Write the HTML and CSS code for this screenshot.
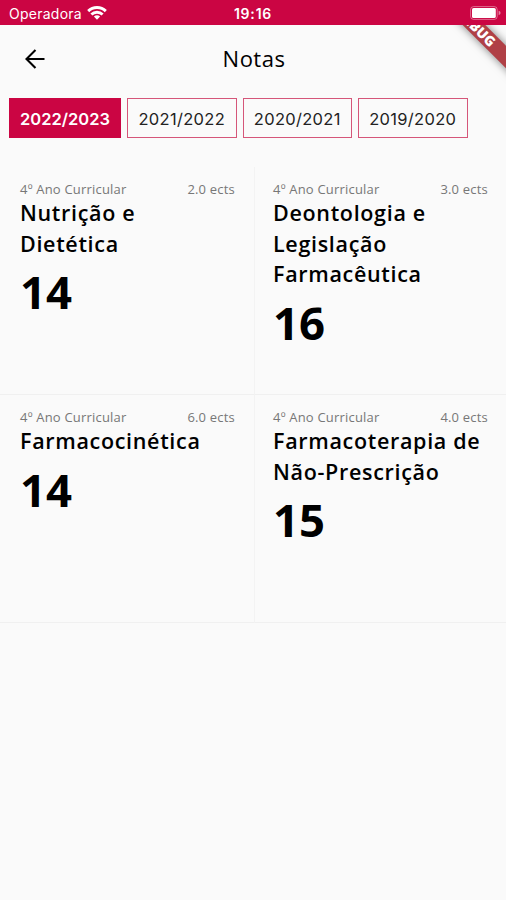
FILE: index.html
```html
<!DOCTYPE html>
<html lang="pt">
<head>
    <meta charset="UTF-8">
    <meta name="viewport" content="width=device-width, initial-scale=1.0">
    <title>Notas</title>
    <link rel="stylesheet" href="styles.css">
</head>
<body>

    <div class="status-bar">
        <div class="carrier">
            <span class="carrier-name">Operadora</span>
            <svg class="wifi" width="20" height="14" viewBox="0 0 20 14" fill="none" stroke="#fff" stroke-width="2.9">
                <path d="M1.2 5.1a12.6 12.6 0 0 1 17.6 0"/>
                <path d="M4.4 8.5a8 8 0 0 1 11.2 0"/>
                <path d="M10 13.8 6.9 10.6a4.5 4.5 0 0 1 6.2 0z" fill="#fff" stroke="none"/>
            </svg>
        </div>
        <span class="clock">19:16</span>
        <svg class="battery" width="31" height="14" viewBox="0 0 31 14">
            <rect x="0.6" y="0.6" width="26.6" height="12.8" rx="3" fill="none" stroke="#fff" stroke-opacity="0.4"/>
            <rect x="2" y="2" width="23.8" height="10" rx="1.6" fill="#fff"/>
            <path d="M28.6 4.8q2 .6 2 2.2t-2 2.2z" fill="#fff" fill-opacity="0.5"/>
        </svg>
    </div>

    <div class="screen">
        <div class="debug-banner">DEBUG</div>

        <header class="app-bar">
            <svg class="back" width="20" height="20" viewBox="0 0 20 20" fill="none" stroke="#000" stroke-width="2.1">
                <path d="M19.5 10H2M10.5 1 1.5 10l9 9"/>
            </svg>
            <h1 class="title">Notas</h1>
        </header>

        <nav class="years">
            <button class="year active">2022/2023</button>
            <button class="year">2021/2022</button>
            <button class="year">2020/2021</button>
            <button class="year">2019/2020</button>
        </nav>

        <main class="grades">
            <div class="grade">
                <div class="info"><span>4º Ano Curricular</span><span>2.0 ects</span></div>
                <h2 class="course">Nutrição e Dietética</h2>
                <div class="score">14</div>
            </div>
            <div class="grade">
                <div class="info"><span>4º Ano Curricular</span><span>3.0 ects</span></div>
                <h2 class="course">Deontologia e Legislação Farmacêutica</h2>
                <div class="score">16</div>
            </div>
            <div class="grade">
                <div class="info"><span>4º Ano Curricular</span><span>6.0 ects</span></div>
                <h2 class="course">Farmacocinética</h2>
                <div class="score">14</div>
            </div>
            <div class="grade">
                <div class="info"><span>4º Ano Curricular</span><span>4.0 ects</span></div>
                <h2 class="course">Farmacoterapia de Não-Prescrição</h2>
                <div class="score">15</div>
            </div>
        </main>
    </div>

</body>
</html>
```
FILE: styles.css
```css
* {
    box-sizing: border-box;
}

body {
    margin: 0;
    height: 900px;
    overflow: hidden;
    background: #fafafa;
    color: #000;
    font-family: "Open Sans", "Noto Sans", sans-serif;
}

.status-bar {
    display: grid;
    grid-template-columns: 1fr auto 1fr;
    align-items: center;
    height: 25px;
    padding: 1px 5px 0 9px;
    background: #cb0543;
    color: #fff;
    font-family: Inter, sans-serif;
    font-size: 14px;
}

.carrier {
    display: flex;
    align-items: center;
    gap: 5px;
}

.carrier-name {
    letter-spacing: 0.25px;
}

.clock {
    margin-right: 4px;
    font-weight: 600;
    letter-spacing: 0.8px;
}

.battery {
    justify-self: end;
}

.screen {
    position: relative;
    height: 875px;
    overflow: hidden;
}

/* the ribbon lies over the top right corner */
.debug-banner {
    position: absolute;
    top: -5px;
    right: -71px;
    width: 200px;
    height: 16px;
    padding-right: 2px;
    background: #b04046;
    box-shadow: 0 0 8px rgba(0, 0, 0, 0.5);
    color: #fff;
    font-size: 13.8px;
    font-weight: 900;
    line-height: 16px;
    text-align: center;
    transform: rotate(45deg);
}

.app-bar {
    display: grid;
    grid-template-columns: 20px 1fr 20px;
    align-items: center;
    height: 68px;
    padding: 0 25px;
}

.title {
    margin: 0 0 2px 2px;
    font-size: 22px;
    font-weight: 400;
    letter-spacing: 0.5px;
    text-align: center;
}

.years {
    display: flex;
    gap: 6px;
    padding: 5px 9px 0;
}

.year {
    width: 109.5px;
    height: 40px;
    padding: 2px 0 0;
    border: 1px solid #d55679;
    background: #fafafa;
    color: #222;
    font-family: Inter, sans-serif;
    font-size: 16.5px;
    letter-spacing: 0.3px;
}

.year.active {
    width: 112px;
    border-color: #cb0543;
    background: #cb0543;
    color: #fff;
    font-weight: 600;
    letter-spacing: 0;
}

.grades {
    display: grid;
    grid-template-columns: 255px 251px;
    grid-auto-rows: 228px;
    margin-top: 29px;
}

.grade {
    padding: 13px 19px 0 20px;
    border-right: 1px solid #f3f3f3;
    border-bottom: 1px solid #f0f0f0;
}

.grade:nth-child(even) {
    padding-right: 18px;
    padding-left: 18px;
    border-right: none;
}

.info {
    display: flex;
    justify-content: space-between;
    color: #777;
    font-size: 13px;
    line-height: 18px;
    letter-spacing: 0.2px;
}

.course {
    margin: 0;
    font-size: 21.5px;
    font-weight: 600;
    line-height: 30.7px;
    letter-spacing: 0.68px;
}

.score {
    margin-top: 1px;
    font-size: 45.5px;
    font-weight: 700;
    line-height: 62px;
}
```
